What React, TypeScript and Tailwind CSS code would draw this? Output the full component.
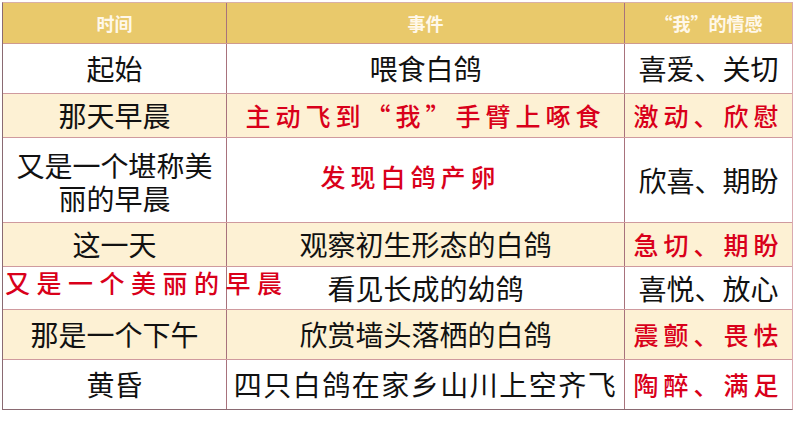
import React from "react";

type Cell = {
  text: string;
  red?: boolean;
  className?: string;
};

type Row = {
  h: string;
  bg: string;
  cells: [Cell, Cell, Cell];
};

const rows: Row[] = [
  {
    h: "h-[50px]",
    bg: "bg-white",
    cells: [{ text: "起始" }, { text: "喂食白鸽" }, { text: "喜爱、关切" }],
  },
  {
    h: "h-[44px]",
    bg: "bg-[#fdf1d4]",
    cells: [
      { text: "那天早晨" },
      { text: "主动飞到“我”手臂上啄食", red: true },
      { text: "激动、欣慰", red: true },
    ],
  },
  {
    h: "h-[85px]",
    bg: "bg-white",
    cells: [
      { text: "又是一个堪称美丽的早晨", className: "px-[10px] leading-[33px] pt-[4px]" },
      { text: "发现白鸽产卵", red: true, className: "pr-[30px] pb-[8px]" },
      { text: "欣喜、期盼" },
    ],
  },
  {
    h: "h-[44px]",
    bg: "bg-[#fdf1d4]",
    cells: [
      { text: "这一天" },
      { text: "观察初生形态的白鸽" },
      { text: "急切、期盼", red: true },
    ],
  },
  {
    h: "h-[43px]",
    bg: "bg-white",
    cells: [
      {
        text: "又是一个美丽的早晨",
        red: true,
        className: "justify-start whitespace-nowrap pl-[2px] pb-[12px] overflow-visible !tracking-[6.5px]",
      },
      { text: "看见长成的幼鸽" },
      { text: "喜悦、放心" },
    ],
  },
  {
    h: "h-[50px]",
    bg: "bg-[#fdf1d4]",
    cells: [
      { text: "那是一个下午" },
      { text: "欣赏墙头落栖的白鸽" },
      { text: "震颤、畏怯", red: true },
    ],
  },
  {
    h: "h-[49px]",
    bg: "bg-white",
    cells: [
      { text: "黄昏" },
      { text: "四只白鸽在家乡山川上空齐飞", className: "tracking-[1.5px]" },
      { text: "陶醉、满足", red: true },
    ],
  },
];

const widths = ["w-[224px]", "w-[398px]", "w-[167px]"];

function TableCell({ cell, w, last }: { cell: Cell; w: string; last: boolean }) {
  return (
    <div
      className={`${w} shrink-0 flex items-center justify-center text-center ${
        last ? "" : "border-r border-[#a8727c]"
      } ${
        cell.red
          ? "text-[#d9001a] text-[25px] font-medium tracking-[5px]"
          : "text-[#111111] text-[28px]"
      } ${cell.className ?? ""}`}
    >
      <span className="leading-[33px]">{cell.text}</span>
    </div>
  );
}

export default function App() {
  return (
    <div
      className="w-[794px] h-[447px] bg-white pt-[2px] pl-[2px]"
      style={{ fontFamily: '"Noto Sans CJK SC", "Noto Sans", sans-serif' }}
    >
      <div className="w-[791px] border border-[#8a6a72] border-t-[#d8b0a8] border-r-[#d9a9b0]">
        <div className="flex h-[41px] bg-[#e9c96b] border-b border-[#cf9a8e]">
          {["时间", "事件", "“我”的情感"].map((t, i) => (
            <div
              key={t}
              className={`${widths[i]} shrink-0 flex items-center justify-center text-[18px] font-bold text-[#fff8ea] ${
                i < 2 ? "border-r border-[#a8727c]" : ""
              }`}
            >
              {t}
            </div>
          ))}
        </div>
        {rows.map((r, ri) => (
          <div
            key={ri}
            className={`flex ${r.h} ${r.bg} ${
              ri < rows.length - 1 ? "border-b border-[#cf9a9e]" : ""
            }`}
          >
            {r.cells.map((c, ci) => (
              <TableCell key={ci} cell={c} w={widths[ci]} last={ci === 2} />
            ))}
          </div>
        ))}
      </div>
    </div>
  );
}
